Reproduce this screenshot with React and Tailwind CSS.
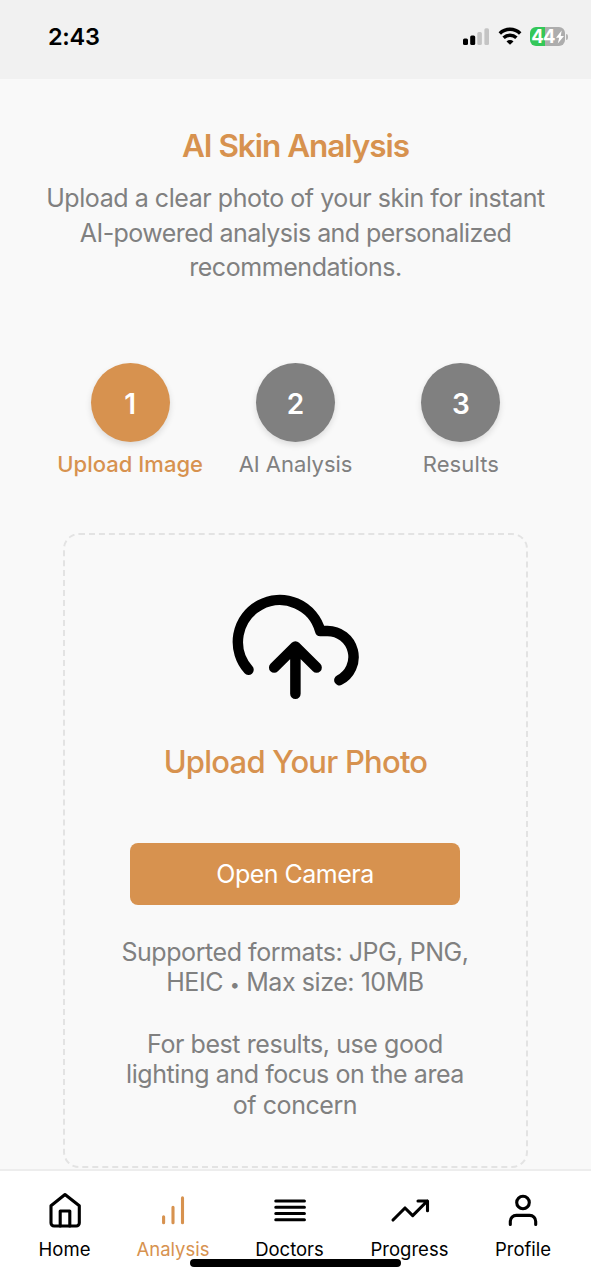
import React from "react";

const steps = [
  { number: "1", label: "Upload Image", circle: "bg-[#d7924f]", text: "font-medium text-[#d7924f] tracking-[0.02px]" },
  { number: "2", label: "AI Analysis", circle: "bg-[#808080]", text: "text-[#808080] tracking-[-0.05px]" },
  { number: "3", label: "Results", circle: "bg-[#808080]", text: "text-[#808080] tracking-[0.1px]" },
];

const tabs = [
  {
    label: "Home",
    box: "w-[109px]",
    icon: (
      <>
        <path d="M20 4.5 34.3 15.7V33a3 3 0 0 1-3 3H9a3 3 0 0 1-3-3V15.7Z" />
        <path d="M15.2 36V21h9.6v15" />
      </>
    ),
  },
  {
    label: "Analysis",
    box: "w-[108px] text-[#d7924f]",
    icon: <path d="M10.6 26.7v6M20 17.3v15.4M29.5 7.9v24.8" />,
  },
  {
    label: "Doctors",
    box: "w-[125px]",
    icon: <path d="M5.8 11h28.6M5.8 17.3h28.6M5.8 23.5h28.6M5.8 29.8h28.6" />,
  },
  {
    label: "Progress",
    box: "w-[115px]",
    icon: <path d="m3 30 12-12 7.7 7.7L37.3 11M28 11h9.5v9.8" />,
  },
  {
    label: "Profile",
    box: "w-[112px]",
    icon: (
      <>
        <circle cx="20" cy="12.5" r="6.3" />
        <path d="M7.3 34.4v-3a6 6 0 0 1 6-6h13.4a6 6 0 0 1 6 6v3" />
      </>
    ),
  },
];

function StatusBar() {
  return (
    <header className="flex h-[79px] shrink-0 justify-between bg-[#f1f1f1] pr-[23px] pl-[48px] text-black">
      <span className="mt-[22px] text-[23.5px] leading-[30px] font-semibold tracking-[-0.3px]">2:43</span>
      <div className="mt-[26px] flex h-[21px] items-center">
        <svg className="h-5 w-[28px] shrink-0" viewBox="0 0 28 20">
          <rect x="0" y="11.5" width="5" height="6.5" rx="1.5" />
          <rect x="7.2" y="8.5" width="5" height="9.5" rx="1.5" />
          <rect x="14.3" y="5" width="4.6" height="13" rx="1.5" fill="#c4c4c4" />
          <rect x="21.4" y="1.2" width="4.6" height="16.8" rx="1.5" fill="#c4c4c4" />
        </svg>
        <svg className="ml-[7px] h-5 w-[24px] shrink-0" viewBox="0 0 24 20" fill="none" stroke="currentColor" strokeWidth="3.5">
          <path d="M1.8 6.4a14.6 14.6 0 0 1 20.4 0M5.6 10.8a9.4 9.4 0 0 1 12.8 0" />
          <path d="M12 17.8 8.5 14.4a5 5 0 0 1 7 0Z" fill="currentColor" stroke="none" />
        </svg>
        <div className="ml-[8px] flex h-[19px] w-[35px] shrink-0 items-center justify-center rounded-[6px] bg-[linear-gradient(90deg,#34c759_44%,#adadad_44%)] text-[18.5px] leading-none font-bold text-white">
          <span className="tracking-[-0.8px]">44</span>
          <svg className="ml-[1px] h-[14px] w-[8px] shrink-0" viewBox="0 0 8 13" fill="currentColor">
            <path d="M5.7 0 0 7.3h3.2L1.8 13 8 5.4H4.7Z" />
          </svg>
        </div>
        <span className="ml-[1px] h-[6px] w-[2px] rounded-r-full bg-[#b5b5b5]" />
      </div>
    </header>
  );
}

function Steps() {
  return (
    <ol className="mx-auto mt-[78px] grid w-[496px] grid-cols-3">
      {steps.map((step) => (
        <li key={step.number} className="flex flex-col items-center">
          <span className={`flex size-[79px] items-center justify-center rounded-full pt-[3px] text-[28px] font-semibold text-white shadow-[0_3px_6px_rgba(0,0,0,0.12)] ${step.circle}`}>
            {step.number}
          </span>
          <span className={`mt-[7px] text-[22px] leading-[30px] whitespace-nowrap ${step.text}`}>{step.label}</span>
        </li>
      ))}
    </ol>
  );
}

function UploadCard() {
  return (
    <section className="mt-[54px] ml-[63px] flex h-[635px] w-[465px] flex-col items-center rounded-[16px] border-2 border-dashed border-[#e3e3e3] text-center">
      <svg className="mt-[50px] mr-[1px] h-[125px] w-[150px]" viewBox="220 585 150 125" fill="none" stroke="#000" strokeWidth="10.5" strokeLinecap="round" strokeLinejoin="round">
        <path d="M248.5 669.8A41.9 41.9 0 1 1 320.2 630.9H327.2A26.1 26.1 0 0 1 339.4 680.2" />
        <path d="M295.4 693.8V647M274.2 667.6 295.4 646.6 316.6 667.6" />
      </svg>
      <h2 className="mt-[32px] text-[31px] leading-[40px] font-medium tracking-[-0.77px] text-[#d7924f]">Upload Your Photo</h2>
      <button className="mt-[61px] mr-[1px] h-[62px] w-[330px] rounded-[8px] bg-[#d7924f] pt-[2px] text-[25px] tracking-[-0.52px] text-white">Open Camera</button>
      <p className="mt-[32px] mr-[1px] text-[25px] leading-[30px] tracking-[-0.44px] whitespace-nowrap text-[#808080]">
        Supported formats: JPG, PNG,
        <br />
        HEIC <span className="inline-block w-[10px] text-[18px] leading-none tracking-normal">•</span> Max size: 10MB
      </p>
      <p className="mt-[32px] mr-[1px] text-[25px] leading-[30.2px] tracking-[-0.43px] whitespace-nowrap text-[#808080]">
        For best results, use good
        <br />
        lighting and focus on the area
        <br />
        of concern
      </p>
    </section>
  );
}

function TabBar() {
  return (
    <nav className="relative flex h-[111px] shrink-0 border-t-2 border-[#ededed] bg-white pl-[10px] text-black">
      {tabs.map((tab) => (
        <div key={tab.label} className={`flex shrink-0 flex-col items-center pt-[19px] ${tab.box}`}>
          <svg className="size-10" viewBox="0 0 40 40" fill="none" stroke="currentColor" strokeWidth="3.1" strokeLinecap="round" strokeLinejoin="round">
            {tab.icon}
          </svg>
          <span className="mt-[7px] text-[18.5px] leading-[24px]">{tab.label}</span>
        </div>
      ))}
      <span className="absolute top-[88px] left-[190px] h-[8px] w-[211px] rounded-full bg-black" />
    </nav>
  );
}

export default function App() {
  return (
    <div className="flex h-[1280px] w-[591px] flex-col overflow-hidden bg-[#f9f9f9] font-['Inter',sans-serif]">
      <StatusBar />
      <main className="h-[1090px] shrink-0 overflow-hidden">
        <div className="pt-[47px] text-center">
          <h1 className="text-[31.5px] leading-[40px] font-semibold tracking-[-1.03px] text-[#d7924f]">AI Skin Analysis</h1>
          <p className="mt-[15px] text-[25px] leading-[34.7px] tracking-[-0.44px] whitespace-nowrap text-[#808080]">
            Upload a clear photo of your skin for instant
            <br />
            <span className="tracking-[-0.55px]">AI-powered analysis and personalized</span>
            <br />
            recommendations.
          </p>
        </div>
        <Steps />
        <UploadCard />
      </main>
      <TabBar />
    </div>
  );
}
